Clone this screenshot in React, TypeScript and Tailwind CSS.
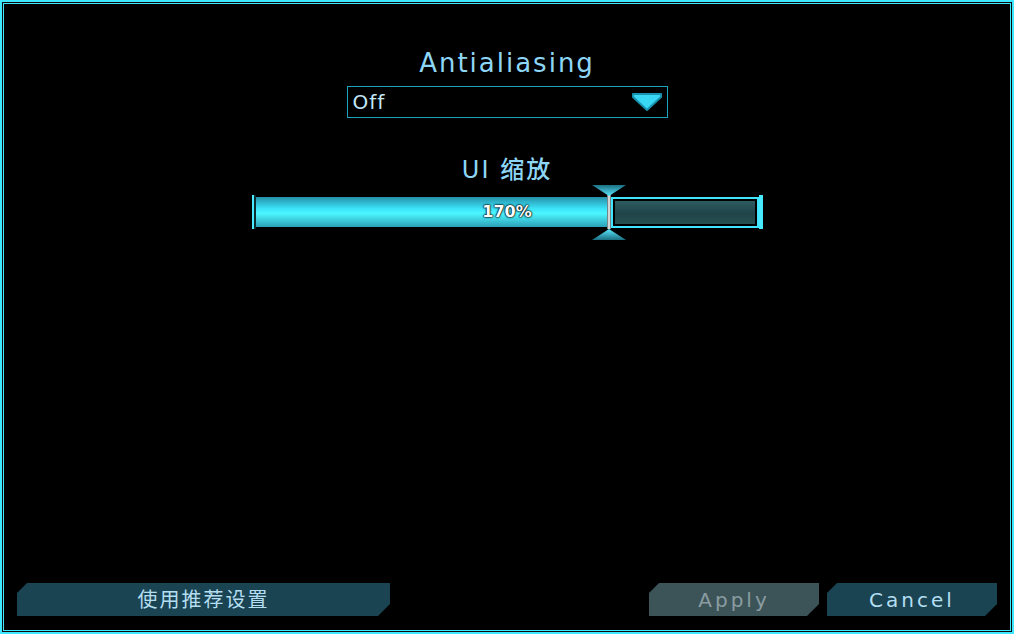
import React from 'react'

const latin = 'font-["DejaVu_Sans","Noto_Sans_CJK_SC",sans-serif]'

function CutButton({ label, disabled, className }: { label: string; disabled?: boolean; className: string }) {
  return (
    <button
      className={`${className} h-[33px] flex items-center justify-center text-[20px] ${latin} [clip-path:polygon(10px_0,100%_0,100%_calc(100%-12px),calc(100%-12px)_100%,0_100%,0_10px)] ${
        disabled ? 'bg-[#3c5457] text-[#8a9ca2]' : 'bg-[#1a4451] text-[#b4def2]'
      }`}
    >
      {label}
    </button>
  )
}

function Triangle({ up }: { up?: boolean }) {
  return (
    <svg width="34" height="11" viewBox="0 0 34 11" className="block">
      <defs>
        <linearGradient id={up ? 'tu' : 'td'} x1="0" y1="0" x2="0" y2="1">
          <stop offset="0" stopColor={up ? '#5ae8ff' : '#1b6f82'} />
          <stop offset="1" stopColor={up ? '#1b6f82' : '#5ae8ff'} />
        </linearGradient>
      </defs>
      {up ? (
        <polygon points="17,0 34,11 0,11" fill="url(#tu)" />
      ) : (
        <polygon points="0,0 34,0 17,11" fill="url(#td)" />
      )}
    </svg>
  )
}

function ScaleSlider() {
  return (
    <div className="relative mt-[9px] flex h-[34px] w-[511px] items-center">
      {/* left cap */}
      <div className="flex h-full">
        <div className="w-[2px] bg-[#48e8ff]" />
        <div className="w-[2px] bg-[#0d2a30]" />
      </div>
      <div className="h-[30px] w-[351px] bg-[linear-gradient(to_bottom,#2590a8,#3ce6fc_40%,#4cf6ff_55%,#2c9fb6)]" />
      {/* handle */}
      <div className="relative h-full w-[4px] bg-[linear-gradient(to_right,#4a5a5e,#ffffff,#4a5a5e)]">
        <div className="absolute -top-[10px] left-1/2 -translate-x-1/2">
          <Triangle />
        </div>
        <div className="absolute -bottom-[11px] left-1/2 -translate-x-1/2">
          <Triangle up />
        </div>
      </div>
      <div className="h-[31px] w-[148px] border-2 border-[#40e4ff] bg-black p-[2px]">
        <div className="h-full w-full bg-[linear-gradient(to_bottom,#2e5c61,#1f4448_55%,#26504f)]" />
      </div>
      {/* right cap */}
      <div className="h-full w-[4px] bg-[#48e8ff]" />
      <div className="pointer-events-none absolute inset-0 flex items-center justify-center">
        <span
          className={`text-[16px] font-bold text-white ${latin} [text-shadow:0_0_2px_#000,0_0_2px_#000,0_0_1px_#000]`}
        >
          170%
        </span>
      </div>
    </div>
  )
}

export default function App() {
  return (
    <div className="h-[634px] w-[1014px] border-2 border-[#3ee6ff] bg-[#0a0a0a] p-[1px]">
      <div className="flex h-full flex-col border border-[#3ee6ff] bg-black px-[13px] pb-[14px]">
        <div className="flex flex-col items-center pt-[43px]">
          <h2 className={`text-[26px] font-medium leading-[32px] tracking-[2px] text-[#8ed6f6] ${latin}`}>Antialiasing</h2>
          <div className="mt-[7px] flex h-[32px] w-[321px] items-center justify-between border border-[#1ea2bc] pl-[5px] pr-[4px]">
            <span className={`text-[20px] tracking-[1px] text-[#c2e8f8] ${latin}`}>Off</span>
            <svg width="32" height="20" viewBox="0 0 32 20">
              <polygon
                points="2,2 30,2 30,5 16,18 2,5"
                fill="#38d8f4"
                stroke="#1793b0"
                strokeWidth="2"
                strokeLinejoin="round"
              />
            </svg>
          </div>
          <h2 className={`mt-[36px] text-[24px] font-medium leading-[32px] tracking-[2px] text-[#8ed6f6] ${latin}`}>UI 缩放</h2>
          <ScaleSlider />
        </div>
        <div className="mt-auto flex items-end justify-between">
          <CutButton label="使用推荐设置" className="w-[373px] tracking-[2px]" />
          <div className="flex gap-[8px]">
            <CutButton label="Apply" disabled className="w-[170px] tracking-[3px]" />
            <CutButton label="Cancel" className="w-[170px] tracking-[3px]" />
          </div>
        </div>
      </div>
    </div>
  )
}
